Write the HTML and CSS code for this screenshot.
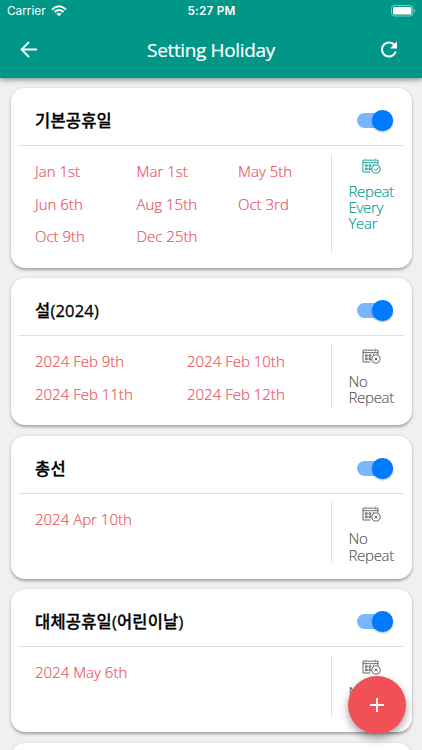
FILE: index.html
```
<!DOCTYPE html>
<html lang="ko">
<head>
<meta charset="utf-8">
<title>Setting Holiday</title>
<link rel="stylesheet" href="styles.css">
</head>
<body>
<svg class="defs" width="0" height="0" aria-hidden="true">
  <symbol id="cal" viewBox="0 0 19 16">
    <path d="M8.5 14H1V2.2H3M5.2 2.2H12M14.2 2.2H16V6.5M4 .7V3.5M13.2 .7V3.5M1 4.7H16"/>
    <path d="M3.4 6.8H5.2V8.3H3.4ZM7 6.8H8.8V8.3H7ZM10.7 6.8H12M3.4 10H5.2V11.8H3.4ZM7 10H8.8V11.8H7Z"/>
    <circle cx="14" cy="11" r="4.1"/>
  </symbol>
  <symbol id="repeat" viewBox="0 0 19 16"><use href="#cal"/><path d="M12 11L13.5 12.6L16.7 9.3"/></symbol>
  <symbol id="once" viewBox="0 0 19 16"><use href="#cal"/><path d="M12.5 9.5L15.5 12.5M15.5 9.5L12.5 12.5"/></symbol>
</svg>
<header class="header">
  <div class="status">
    <div class="carrier"><span>Carrier</span>
      <svg width="16" height="12" viewBox="0 0 16 12"><g fill="none" stroke="#fff" stroke-width="2"><path d="M1 4.5Q8-2 15 4.5"/><path d="M3.5 7.1Q8 3 12.5 7.1"/></g><path d="M5.4 8.7Q8 6.7 10.6 8.7L8 11.3Z" fill="#fff"/></svg>
    </div>
    <div class="time">5:27 PM</div>
    <svg class="battery" width="25" height="12" viewBox="0 0 25 12"><rect x=".5" y=".5" width="21.5" height="10.5" rx="3" fill="none" stroke="#fff" stroke-opacity=".5"/><rect x="2" y="2" width="18.5" height="7.5" rx="1.5" fill="#fff"/><path d="M23.3 4Q25.2 5.7 23.3 7.5Z" fill="#fff" fill-opacity=".6"/></svg>
  </div>
  <div class="nav">
    <svg width="24" height="24" viewBox="0 0 24 24" fill="none" stroke="#fff" stroke-width="1.8"><path d="M20 11.5H5M12 4L4.5 11.5L12 19"/></svg>
    <h1>Setting Holiday</h1>
    <svg width="24" height="24" viewBox="0 .5 24 24" fill="#fff"><path d="M17.65 6.35A7.96 7.96 0 0 0 12 4a8 8 0 1 0 7.73 10h-2.08A6 6 0 1 1 12 6c1.66 0 3.14.69 4.22 1.78L13 11h7V4z"/></svg>
  </div>
</header>
<main class="list">
  <section class="card">
    <div class="top"><h2>기본공휴일</h2><span class="switch"></span></div>
    <div class="body"><div class="dates three"><span>Jan 1st</span><span>Mar 1st</span><span>May 5th</span><span>Jun 6th</span><span>Aug 15th</span><span>Oct 3rd</span><span>Oct 9th</span><span>Dec 25th</span></div>
      <div class="mode on"><svg width="19" height="16"><use href="#repeat"/></svg><p>Repeat<br>Every<br>Year</p></div></div>
  </section>
  <section class="card">
    <div class="top"><h2>설(2024)</h2><span class="switch"></span></div>
    <div class="body"><div class="dates two"><span>2024 Feb 9th</span><span>2024 Feb 10th</span><span>2024 Feb 11th</span><span>2024 Feb 12th</span></div>
      <div class="mode"><svg width="19" height="16"><use href="#once"/></svg><p>No<br>Repeat</p></div></div>
  </section>
  <section class="card">
    <div class="top"><h2>총선</h2><span class="switch"></span></div>
    <div class="body"><div class="dates"><span>2024 Apr 10th</span></div>
      <div class="mode"><svg width="19" height="16"><use href="#once"/></svg><p>No<br>Repeat</p></div></div>
  </section>
  <section class="card">
    <div class="top"><h2>대체공휴일(어린이날)</h2><span class="switch"></span></div>
    <div class="body"><div class="dates"><span>2024 May 6th</span></div>
      <div class="mode"><svg width="19" height="16"><use href="#once"/></svg><p>No</p></div></div>
  </section>
  <section class="card"></section>
</main>
<button class="fab" aria-label="Add"><svg width="24" height="24" viewBox="0 0 24 24" stroke="#fff" stroke-width="2"><path d="M12 5V19M5 12H19"/></svg></button>
</body>
</html>
```
FILE: styles.css
```
* { box-sizing: border-box; }
body { margin: 0; height: 750px; overflow: hidden; background: #f0f0f0; font-family: "Open Sans", "Noto Sans CJK KR", sans-serif; }
h1, h2, p { margin: 0; }
.defs { position: absolute; }
.header { position: relative; height: 78px; background: #009688; color: #fff; box-shadow: 0 2px 5px rgba(0,0,0,.4); }
.status { display: grid; grid-template-columns: 1fr auto 1fr; height: 22px; padding: 0 6px 0 7px; align-items: center; font: 11.8px/22px Inter, sans-serif; }
.carrier { display: flex; align-items: center; gap: 5px; }
.time { font-weight: 600; letter-spacing: .2px; }
.battery { justify-self: end; }
.nav { display: flex; height: 55px; padding: 0 21px 0 17px; align-items: center; justify-content: space-between; }
.nav h1 { padding-left: 4px; font-size: 19px; font-weight: 400; letter-spacing: -.35px; -webkit-text-stroke: .2px #fff; }
.list { display: flex; height: 672px; flex-direction: column; gap: 10.4px; padding: 10px 10.5px 0; overflow: hidden; }
.card { flex: none; min-height: 143px; padding: 0 8px 16px; border-radius: 14px; background: #fff; box-shadow: 0 1.5px 3px rgba(0,0,0,.32); }
.top { display: flex; height: 58px; padding: 8px 11px 0 16.5px; align-items: center; justify-content: space-between; border-bottom: 1px solid #dedede; }
.top h2 { padding-top: 1px; color: #000; font: 500 16.5px/24px "Open Sans", "Noto Sans CJK KR", sans-serif; letter-spacing: .2px; -webkit-text-stroke: .3px #000; }
.switch { display: flex; width: 36px; height: 14.5px; border-radius: 8px; background: #7ab6ff; align-items: center; justify-content: flex-end; }
.switch::after { content: ""; width: 20.5px; height: 20.5px; flex: none; border-radius: 50%; background: #007aff; box-shadow: 0 1px 2px rgba(0,0,0,.3); }
.body { display: flex; padding-top: 8px; }
.dates { display: grid; width: 312.5px; padding-left: 16.5px; grid-auto-rows: 32.6px; align-content: start; color: #e9565e; font-weight: 300; font-size: 15px; line-height: 34px; white-space: nowrap; -webkit-text-stroke: .2px currentColor; }
.three { grid-template-columns: 101.5px 101.5px 1fr; }
.two { grid-template-columns: 152px 1fr; }
.mode { width: 72px; padding: 4px 0 0 16.5px; border-left: 1px solid #dedede; color: #555; font-weight: 300; font-size: 15px; line-height: 16.3px; letter-spacing: -.3px; }
.mode svg { display: block; margin: 0 0 8.5px 13.5px; overflow: visible; fill: none; stroke: currentColor; stroke-width: .9; }
.mode p { min-height: 32.6px; -webkit-text-stroke: .15px currentColor; }
.on { color: #009688; }
.fab { position: absolute; left: 348px; top: 676px; display: grid; width: 58px; height: 58px; padding: 0; place-items: center; border: 0; border-radius: 50%; background: #f15056; box-shadow: 0 4px 9px rgba(0,0,0,.38); }
```
